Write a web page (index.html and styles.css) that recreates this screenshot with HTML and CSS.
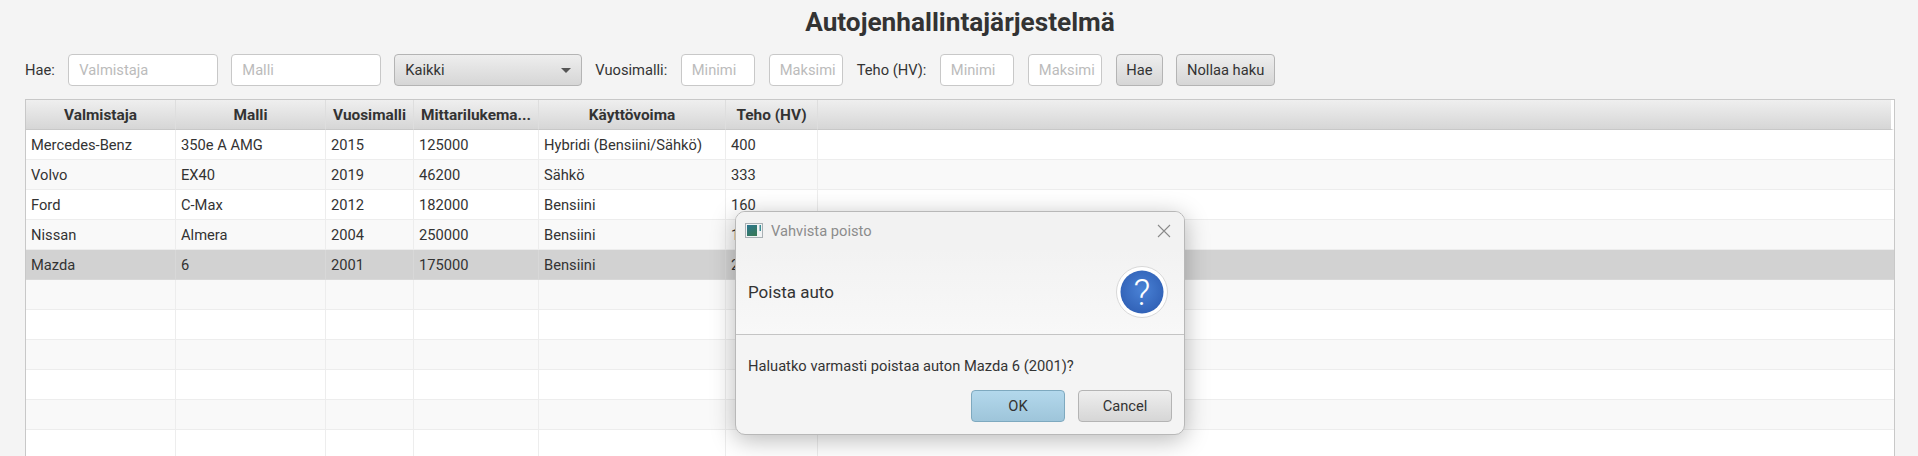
FILE: index.html

```html
<!DOCTYPE html>
<html lang="en">
<head>
    <meta charset="UTF-8">
    <title>Autojenhallintajärjestelmä</title>
    <link rel="stylesheet" href="styles.css">
</head>
<body>
    <h1 class="title">Autojenhallintajärjestelmä</h1>

    <div class="toolbar">
        <span class="label">Hae:</span>
        <input class="field field-wide" type="text" placeholder="Valmistaja">
        <input class="field field-wide" type="text" placeholder="Malli">
        <div class="combo"><span>Kaikki</span><i class="combo-arrow"></i></div>
        <span class="label">Vuosimalli:</span>
        <input class="field field-small" type="text" placeholder="Minimi">
        <input class="field field-small" type="text" placeholder="Maksimi">
        <span class="label">Teho (HV):</span>
        <input class="field field-small" type="text" placeholder="Minimi">
        <input class="field field-small" type="text" placeholder="Maksimi">
        <button class="btn btn-search">Hae</button>
        <button class="btn btn-reset">Nollaa haku</button>
    </div>

    <div class="table-view">
        <table>
            <colgroup>
                <col class="col-make">
                <col class="col-model">
                <col class="col-year">
                <col class="col-km">
                <col class="col-fuel">
                <col class="col-power">
                <col>
            </colgroup>
            <thead>
                <tr>
                    <th>Valmistaja</th>
                    <th>Malli</th>
                    <th>Vuosimalli</th>
                    <th>Mittarilukema...</th>
                    <th>Käyttövoima</th>
                    <th>Teho (HV)</th>
                    <th class="filler"></th>
                </tr>
            </thead>
            <tbody>
                <tr><td>Mercedes-Benz</td><td>350e A AMG</td><td>2015</td><td>125000</td><td>Hybridi (Bensiini/Sähkö)</td><td>400</td><td></td></tr>
                <tr><td>Volvo</td><td>EX40</td><td>2019</td><td>46200</td><td>Sähkö</td><td>333</td><td></td></tr>
                <tr><td>Ford</td><td>C-Max</td><td>2012</td><td>182000</td><td>Bensiini</td><td>160</td><td></td></tr>
                <tr><td>Nissan</td><td>Almera</td><td>2004</td><td>250000</td><td>Bensiini</td><td>110</td><td></td></tr>
                <tr class="selected"><td>Mazda</td><td>6</td><td>2001</td><td>175000</td><td>Bensiini</td><td>200</td><td></td></tr>
                <tr><td></td><td></td><td></td><td></td><td></td><td></td><td></td></tr>
                <tr><td></td><td></td><td></td><td></td><td></td><td></td><td></td></tr>
                <tr><td></td><td></td><td></td><td></td><td></td><td></td><td></td></tr>
                <tr><td></td><td></td><td></td><td></td><td></td><td></td><td></td></tr>
                <tr><td></td><td></td><td></td><td></td><td></td><td></td><td></td></tr>
                <tr><td></td><td></td><td></td><td></td><td></td><td></td><td></td></tr>
            </tbody>
        </table>
    </div>

    <div class="dialog">
        <div class="dialog-bar">
            <svg class="window-icon" width="18" height="15" viewBox="0 0 18 15">
                <defs>
                    <linearGradient id="winFill" x1="0" y1="0" x2="0.6" y2="1">
                        <stop offset="0" stop-color="#2b7690"/>
                        <stop offset="1" stop-color="#37795a"/>
                    </linearGradient>
                </defs>
                <rect x="0.5" y="0.5" width="17" height="14" fill="#f1f3f4" stroke="#a9b0b4"/>
                <rect x="2" y="2" width="10" height="11" fill="url(#winFill)"/>
                <rect x="14.5" y="2" width="1.5" height="6" fill="#3e8f95"/>
            </svg>
            <span class="dialog-title">Vahvista poisto</span>
            <svg class="close-icon" width="14" height="14" viewBox="0 0 14 14">
                <path d="M1 1 L13 13 M13 1 L1 13" stroke="#8a8a8a" stroke-width="1.1" fill="none"/>
            </svg>
        </div>
        <div class="dialog-header">
            <span class="dialog-heading">Poista auto</span>
            <svg class="question-icon" width="52" height="52" viewBox="0 0 52 52">
                <defs>
                    <radialGradient id="qFill" cx="0.5" cy="0.45" r="0.6">
                        <stop offset="0" stop-color="#4a82d6"/>
                        <stop offset="1" stop-color="#2f5fb4"/>
                    </radialGradient>
                </defs>
                <circle cx="26" cy="26" r="25.5" fill="#fff" stroke="#d8d8d8"/>
                <circle cx="26" cy="26" r="21.5" fill="url(#qFill)"/>
                <text class="question-mark" x="26" y="39" text-anchor="middle">?</text>
            </svg>
        </div>
        <div class="dialog-content">Haluatko varmasti poistaa auton Mazda 6 (2001)?</div>
        <div class="dialog-buttons">
            <button class="btn btn-dialog btn-default">OK</button>
            <button class="btn btn-dialog">Cancel</button>
        </div>
    </div>
</body>
</html>
```

FILE: styles.css

```css
* {
    box-sizing: border-box;
}
html, body {
    height: 100%;
}
body {
    margin: 0;
    padding: 0 23px 0 25px;
    background: #f4f4f4;
    color: #333;
    font-family: Roboto, "Liberation Sans", sans-serif;
    font-size: 14.7px;
    overflow: hidden;
    position: relative;
}
.title {
    margin: 0;
    height: 54px;
    padding-top: 6px;
    text-align: center;
    font-size: 26.2px;
    line-height: 32px;
    font-weight: 700;
}
.toolbar {
    display: flex;
    align-items: center;
    gap: 13.5px;
    height: 32px;
}
.label {
    white-space: nowrap;
}
.field {
    height: 32px;
    padding: 0 0 0 10px;
    border: 1px solid #c8c8c8;
    border-radius: 4px;
    background: #fff;
    font: inherit;
    color: #333;
}
.field::placeholder {
    color: #bbb;
    opacity: 1;
}
.field-wide {
    width: 149.5px;
}
.field-small {
    width: 74.5px;
}
.combo {
    display: flex;
    align-items: center;
    justify-content: space-between;
    width: 187.5px;
    height: 32px;
    padding: 0 10px;
    border: 1px solid #b4b4b4;
    border-radius: 4px;
    background: linear-gradient(#eeeeee, #d6d6d6);
}
.combo-arrow {
    width: 0;
    height: 0;
    border-left: 5px solid transparent;
    border-right: 5px solid transparent;
    border-top: 5px solid #555;
}
.btn {
    height: 32px;
    padding: 0;
    border: 1px solid #b4b4b4;
    border-radius: 4px;
    background: linear-gradient(#eeeeee, #d6d6d6);
    font: inherit;
    color: #333;
}
.btn-search {
    width: 47px;
}
.btn-reset {
    width: 98.5px;
}

.table-view {
    margin-top: 13px;
    height: 400px;
    border: 1px solid #c8c8c8;
    background: #fff;
}
table {
    width: 100%;
    table-layout: fixed;
    border-collapse: separate;
    border-spacing: 0;
}
.col-make, .col-model {
    width: 150px;
}
.col-year {
    width: 88px;
}
.col-km {
    width: 125px;
}
.col-fuel {
    width: 187px;
}
.col-power {
    width: 92px;
}
th {
    height: 30px;
    padding: 0 4px;
    background: linear-gradient(#efefef, #d6d6d6);
    border-right: 1px solid #dedede;
    border-bottom: 1px solid #c8c8c8;
    font-size: 15.4px;
    font-weight: 700;
    white-space: nowrap;
    overflow: hidden;
}
th.filler {
    border-right: 3px solid #fff;
}
td {
    height: 30px;
    padding: 0 5px;
    border-right: 1px solid #ededed;
    border-bottom: 1px solid #ededed;
    white-space: nowrap;
    overflow: hidden;
}
td:last-child {
    border-right: 0;
}
tbody tr:nth-child(even) {
    background: #f9f9f9;
}
tbody tr.selected {
    background: #d2d2d2;
}
tr.selected td {
    border-color: #d8d8d8;
}

.dialog {
    position: absolute;
    left: 735px;
    top: 211px;
    width: 450px;
    height: 224px;
    display: flex;
    flex-direction: column;
    border: 1px solid #b8b8b8;
    border-radius: 10px;
    background: #f4f4f4;
    box-shadow: 0 5px 24px rgba(0, 0, 0, 0.28);
    overflow: hidden;
}
.dialog-bar {
    display: flex;
    align-items: center;
    gap: 8px;
    height: 37px;
    padding: 0 13px 0 9px;
    background: #f2f2f2;
}
.dialog-title {
    flex: 1;
    color: #8c8c8c;
}
.dialog-header {
    display: flex;
    align-items: center;
    justify-content: space-between;
    height: 86px;
    padding: 1px 16px 0 12px;
    background: linear-gradient(#f2f2f2, #f8f8f8);
    border-bottom: 1px solid #c4c4c4;
}
.dialog-heading {
    font-size: 17px;
}
.question-mark {
    font-size: 37px;
    font-weight: 300;
    fill: #fff;
}
.dialog-content {
    flex: 1;
    display: flex;
    align-items: center;
    padding: 7px 12px 0;
}
.dialog-buttons {
    display: flex;
    justify-content: flex-end;
    gap: 13px;
    padding: 0 12px 12px;
}
.btn-dialog {
    width: 94px;
}
.btn-default {
    background: linear-gradient(#b3d8ec, #9ec5da);
    border-color: #7ea9bf;
}
```
